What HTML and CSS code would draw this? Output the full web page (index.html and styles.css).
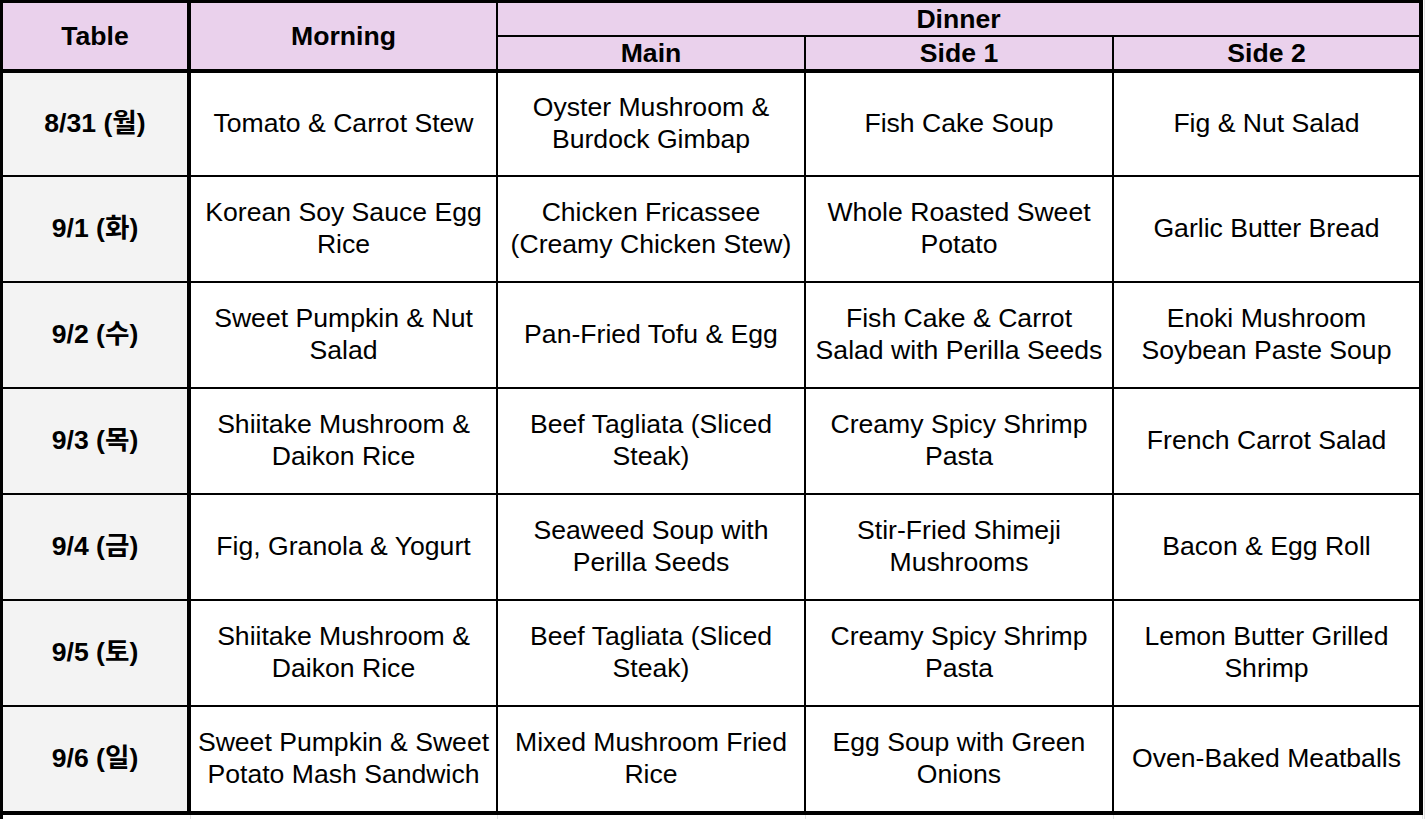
FILE: index.html
```html
<!DOCTYPE html>
<html lang="en">
<head>
<meta charset="utf-8">
<title>Meal Plan</title>
<link rel="stylesheet" href="styles.css">
</head>
<body>
<div class="sheet">
  <table class="menu">
    <colgroup>
      <col class="w-date">
      <col class="w-morning">
      <col class="w-main">
      <col class="w-side1">
      <col class="w-side2">
    </colgroup>
    <thead>
      <tr class="h1">
        <th rowspan="2" class="date-col head-bottom">Table</th>
        <th rowspan="2" class="head-bottom">Morning</th>
        <th colspan="3" class="last-col">Dinner</th>
      </tr>
      <tr class="h2">
        <th class="head-bottom">Main</th>
        <th class="head-bottom">Side 1</th>
        <th class="head-bottom last-col">Side 2</th>
      </tr>
    </thead>
    <tbody>
      <tr class="r-first">
        <td class="date-col">8/31 (월)</td>
        <td>Tomato &amp; Carrot Stew</td>
        <td>Oyster Mushroom &amp;<br>Burdock Gimbap</td>
        <td>Fish Cake Soup</td>
        <td class="last-col">Fig &amp; Nut Salad</td>
      </tr>
      <tr>
        <td class="date-col">9/1 (화)</td>
        <td>Korean Soy Sauce Egg<br>Rice</td>
        <td>Chicken Fricassee<br>(Creamy Chicken Stew)</td>
        <td>Whole Roasted Sweet<br>Potato</td>
        <td class="last-col">Garlic Butter Bread</td>
      </tr>
      <tr>
        <td class="date-col">9/2 (수)</td>
        <td>Sweet Pumpkin &amp; Nut<br>Salad</td>
        <td>Pan-Fried Tofu &amp; Egg</td>
        <td>Fish Cake &amp; Carrot<br>Salad with Perilla Seeds</td>
        <td class="last-col">Enoki Mushroom<br>Soybean Paste Soup</td>
      </tr>
      <tr>
        <td class="date-col">9/3 (목)</td>
        <td>Shiitake Mushroom &amp;<br>Daikon Rice</td>
        <td>Beef Tagliata (Sliced<br>Steak)</td>
        <td>Creamy Spicy Shrimp<br>Pasta</td>
        <td class="last-col">French Carrot Salad</td>
      </tr>
      <tr>
        <td class="date-col">9/4 (금)</td>
        <td>Fig, Granola &amp; Yogurt</td>
        <td>Seaweed Soup with<br>Perilla Seeds</td>
        <td>Stir-Fried Shimeji<br>Mushrooms</td>
        <td class="last-col">Bacon &amp; Egg Roll</td>
      </tr>
      <tr>
        <td class="date-col">9/5 (토)</td>
        <td>Shiitake Mushroom &amp;<br>Daikon Rice</td>
        <td>Beef Tagliata (Sliced<br>Steak)</td>
        <td>Creamy Spicy Shrimp<br>Pasta</td>
        <td class="last-col">Lemon Butter Grilled<br>Shrimp</td>
      </tr>
      <tr class="r-last">
        <td class="date-col">9/6 (일)</td>
        <td>Sweet Pumpkin &amp; Sweet<br>Potato Mash Sandwich</td>
        <td>Mixed Mushroom Fried<br>Rice</td>
        <td>Egg Soup with Green<br>Onions</td>
        <td class="last-col">Oven-Baked Meatballs</td>
      </tr>
      <tr class="r-grid">
        <td class="grid-cell"></td>
        <td class="grid-cell"></td>
        <td class="grid-cell"></td>
        <td class="grid-cell"></td>
        <td class="grid-cell"></td>
      </tr>
    </tbody>
  </table>
  <div class="gridline"></div>
</div>
</body>
</html>
```

FILE: styles.css
```css
html, body {
  margin: 0;
  padding: 0;
  background: #ffffff;
}

body {
  font-family: "Liberation Sans", Arial, "Noto Sans CJK KR", sans-serif;
  color: #000;
  overflow: hidden;
}

.sheet {
  display: flex;
  align-items: stretch;
}

.menu {
  width: 1423px;
  table-layout: fixed;
  border-collapse: separate;
  border-spacing: 0;
  border-left: 3px solid #000;
  border-top: 3px solid #000;
  font-size: 26.6px;
  line-height: 32px;
  flex: none;
}

.w-date { width: 188px; }
.w-morning { width: 307px; }
.w-main { width: 308px; }
.w-side1 { width: 308px; }
.w-side2 { width: 309px; }

.menu th,
.menu td {
  border-right: 2px solid #000;
  border-bottom: 2px solid #000;
  padding: 0 3px;
  text-align: center;
  vertical-align: middle;
  white-space: nowrap;
}

.menu tbody td {
  padding-bottom: 2px;
}

.menu th {
  background: #ead1ec;
  font-weight: bold;
}

.menu .date-col {
  border-right-width: 4px;
}

.menu td.date-col {
  background: #f3f3f3;
  font-weight: bold;
}

.menu .last-col {
  border-right-width: 4px;
}

.menu .head-bottom {
  border-bottom-width: 4px;
}

.h1 { height: 33px; }
.h2 { height: 36px; }

.menu tbody tr { height: 106px; }
.menu tbody tr.r-first { height: 104px; }
.menu tbody tr.r-last { height: 108px; }
.menu tbody tr.r-last td { border-bottom-width: 4px; }

.menu tbody tr.r-grid { height: 8px; }
.menu td.grid-cell {
  border-bottom: none;
  border-right: 1px solid #e2e2e2;
  padding: 0;
  line-height: 0;
}

.gridline {
  width: 1px;
  margin-left: 1px;
  background: #e2e2e2;
  flex: none;
}
```
